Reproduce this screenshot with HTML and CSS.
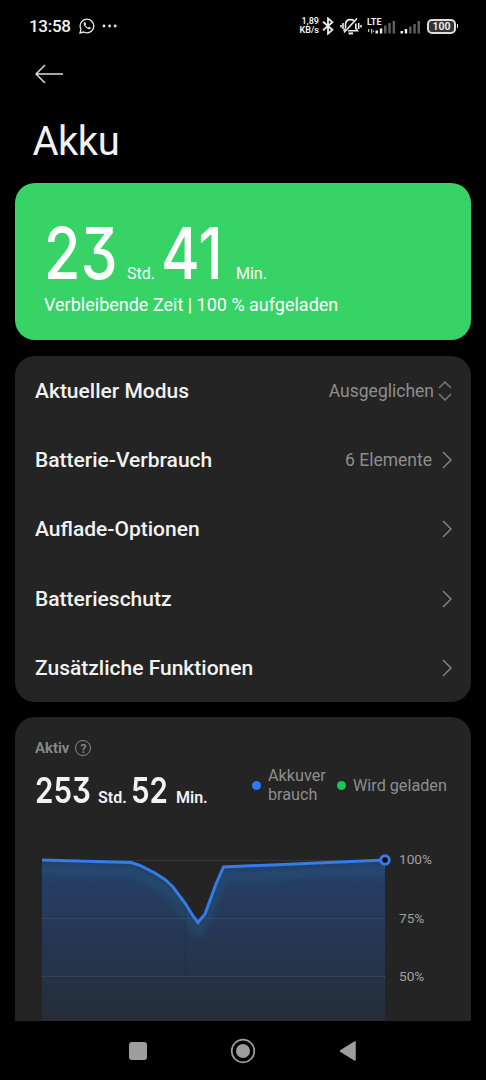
FILE: index.html
```html
<!DOCTYPE html>
<html lang="de">
<head>
    <meta charset="UTF-8">
    <meta name="viewport" content="width=device-width, initial-scale=1.0">
    <title>Akku</title>
    <link rel="stylesheet" href="styles.css">
</head>
<body>

<div class="phone">
    <!-- Status bar -->
    <div class="status-bar">
        <span class="clock">13:58</span>
        <svg class="whatsapp" width="16" height="16" viewBox="0 0 16 16" fill="none" stroke="#e8e8e8" stroke-width="1.3">
            <path d="M1 15l1-3.7A6.8 6.8 0 1 1 4.7 14z"/>
            <path d="M5.2 4.2c-1 1-.6 3 1.4 5s4 2.500 5 1.400c.5-.6.2-.9-.3-1.200l-1.200-.6-1 .9C8 9.400 6.700 8.100 6.300 7.100l.8-.9-.6-1.500c-.2-.5-.8-.9-1.300-.5z" fill="#e8e8e8" stroke="none"/>
        </svg>
        <svg class="dots" width="16" height="4" viewBox="0 0 16 4" fill="#e8e8e8">
            <circle cx="2" cy="2" r="1.4"/>
            <circle cx="7.600" cy="2" r="1.4"/>
            <circle cx="13.200" cy="2" r="1.4"/>
        </svg>

        <div class="status-icons">
            <span class="speed">1,89<br>KB/s</span>
            <svg class="bluetooth" width="12" height="18" viewBox="0 0 12 18" fill="none" stroke="#eee" stroke-width="1.8">
                <path d="M1 4.800l9.400 8L6 16.700V1.300l4.400 3.900L1 13.200"/>
            </svg>
            <svg class="bell" width="22" height="18" viewBox="0 0 22 18" fill="none" stroke="#eee" stroke-width="1.6">
                <path d="M5.500 11V7.500C5.500 4.500 7.500 2.600 10.500 2.600c1.500 0 2.600.4 3.500 1.200M15.800 6.500v4.800l1.700 2.500H8M3.500 13.800l2-2.300"/>
                <path d="M8.500 16.400h4.500" stroke-width="2"/>
                <path d="M4 15.500L17 1.500"/>
                <path d="M3 6v6M18.700 6v6M1 8v2.500M21 8v2.500"/>
            </svg>
            <div class="network">
                <span class="lte">LTE</span>
                <svg width="29" height="15" viewBox="0 0 29 15" fill="#eee">
                    <path d="M1 10h1.300v3H1zM4 10h1.300v4.500H4zM6 11.500h1v1.500H6z" fill="#bbb"/>
                    <path d="M8.500 11.500h2.500v3H8.500zM12.800 9.500h2.500v5h-2.500z"/>
                    <path d="M17 6.500h2.500v8H17zM21.300 4h2.500v10.500h-2.500zM25.600 2h2.500v12.500h-2.500z" fill="#5c5c5c"/>
                </svg>
            </div>
            <svg class="signal" width="21" height="15" viewBox="0 0 21 15" fill="#eee">
                <path d="M.5 12H3v2.500H.5zM4.700 10h2.500v4.500H4.700z"/>
                <path d="M9 7.500h2.500v7H9zM13.300 5h2.500v9.500h-2.500zM17.500 2H20v12.500h-2.500z" fill="#5c5c5c"/>
            </svg>
            <span class="battery">100</span>
            <span class="battery-tip"></span>
        </div>
    </div>

    <!-- Header -->
    <div class="header">
        <svg width="28" height="20" viewBox="0 0 28 20" fill="none" stroke="#ddd" stroke-width="1.5">
            <path d="M10 1L1 10l9 9M1 10h27"/>
        </svg>
        <h1>Akku</h1>
    </div>

    <!-- Remaining time -->
    <div class="remaining">
        <div class="remaining-time">
            <span class="num"><span class="digits">23</span></span>
            <span class="unit">Std.</span>
            <span class="num num-min"><span class="digits">41</span></span>
            <span class="unit">Min.</span>
        </div>
        <div class="remaining-info">Verbleibende Zeit | 100 % aufgeladen</div>
    </div>

    <!-- Options -->
    <div class="card options">
        <div class="row">
            <span class="label">Aktueller Modus</span>
            <span class="value">Ausgeglichen</span>
            <svg class="updown" width="14" height="20" viewBox="0 0 14 20" fill="none" stroke="#777" stroke-width="1.5">
                <path d="M1 7l6-6 6 6M1 13l6 6 6-6"/>
            </svg>
        </div>
        <div class="row">
            <span class="label">Batterie-Verbrauch</span>
            <span class="value">6 Elemente</span>
            <svg class="chevron" width="10" height="18" viewBox="0 0 10 18"><path d="M1 1l8 8-8 8"/></svg>
        </div>
        <div class="row">
            <span class="label">Auflade-Optionen</span>
            <svg class="chevron" width="10" height="18" viewBox="0 0 10 18"><path d="M1 1l8 8-8 8"/></svg>
        </div>
        <div class="row">
            <span class="label">Batterieschutz</span>
            <svg class="chevron" width="10" height="18" viewBox="0 0 10 18"><path d="M1 1l8 8-8 8"/></svg>
        </div>
        <div class="row">
            <span class="label">Zusätzliche Funktionen</span>
            <svg class="chevron" width="10" height="18" viewBox="0 0 10 18"><path d="M1 1l8 8-8 8"/></svg>
        </div>
    </div>

    <!-- Usage chart -->
    <div class="card usage">
        <div class="usage-title">Aktiv <span class="help">?</span></div>
        <div class="usage-head">
            <div class="active-time">
                <span class="num"><span class="digits">253</span></span>
                <span class="unit">Std.</span>
                <span class="num num-min"><span class="digits">52</span></span>
                <span class="unit">Min.</span>
            </div>
            <div class="legend">
                <span class="dot blue"></span>
                <span class="legend-use">Akkuver<br>brauch</span>
                <span class="dot green"></span>
                <span>Wird geladen</span>
            </div>
        </div>
        <div class="chart">
            <svg width="352" height="171" viewBox="0 0 352 171" fill="none">
                <defs>
                    <linearGradient id="area" x1="0" y1="10" x2="0" y2="171" gradientUnits="userSpaceOnUse">
                        <stop offset="0" stop-color="#26406a"/>
                        <stop offset="0.35" stop-color="#26395a"/>
                        <stop offset="1" stop-color="#252d37"/>
                    </linearGradient>
                    <filter id="glow" x="-10%" y="-30%" width="120%" height="180%">
                        <feGaussianBlur stdDeviation="3.5"/>
                    </filter>
                    <clipPath id="areaClip">
                        <path d="M0 10L89 12.500 98 15.500 112 22.500 123 29.500 131 37 143 53 151 66 156 72.500 163 64 174 34 181.500 17 343 10V171H0z"/>
                    </clipPath>
                </defs>
                <path d="M0 10.500H343" stroke="#484848" stroke-dasharray="1 1"/>
                <path d="M0 10L89 12.500 98 15.500 112 22.500 123 29.500 131 37 143 53 151 66 156 72.500 163 64 174 34 181.500 17 343 10V171H0z" fill="url(#area)"/>
                <g clip-path="url(#areaClip)">
                    <path d="M-8 20L89 22.500 98 25.500 112 32.500 123 39.500 131 47 143 63 151 76 156 82.500 163 74 174 44 181.500 27 352 20" stroke="#267195" stroke-opacity=".25" stroke-width="8" filter="url(#glow)"/>
                </g>
                <path d="M0 68.500H343M0 126.500H343" stroke="#4b5d76" stroke-opacity=".75" stroke-dasharray="1 1"/>
                <path d="M143.500 54V171" stroke="#202c3c" stroke-opacity=".5"/>
                <path d="M0 10L89 12.500 98 15.500 112 22.500 123 29.500 131 37 143 53 151 66 156 72.500 163 64 174 34 181.500 17 343 10" stroke="#327de9" stroke-width="3"/>
                <circle cx="343" cy="10" r="4.300" fill="#050a12" stroke="#327de9" stroke-width="3"/>
            </svg>
            <div class="axis">
                <span>100%</span>
                <span>75%</span>
                <span>50%</span>
            </div>
        </div>
    </div>

    <!-- Navigation bar -->
    <div class="nav-bar">
        <svg width="18" height="18" viewBox="0 0 18 18"><rect width="18" height="18" rx="3" fill="#9d9d9d"/></svg>
        <svg width="26" height="26" viewBox="0 0 26 26">
            <circle cx="13" cy="13" r="11.300" fill="none" stroke="#9d9d9d" stroke-width="1.700"/>
            <circle cx="13" cy="13" r="7" fill="#9d9d9d"/>
        </svg>
        <svg width="18" height="20" viewBox="0 0 18 20"><path d="M1.500 10L16 1v18z" fill="#9d9d9d" stroke="#9d9d9d" stroke-width="1.500" stroke-linejoin="round"/></svg>
    </div>
</div>

</body>
</html>
```
FILE: styles.css
```css
body {
    margin: 0;
    background-color: #000;
    color: #f2f2f2;
    font-family: Roboto, sans-serif;
}

svg {
    display: block;
    flex-shrink: 0;
}

h1 {
    margin: 0;
    font-size: 40px;
    font-weight: 400;
    letter-spacing: -0.5px;
    line-height: 48px;
}

.phone {
    display: flex;
    flex-direction: column;
    width: 486px;
    height: 1080px;
    overflow: hidden;
}

.status-bar {
    display: flex;
    align-items: center;
    height: 52px;
    padding: 0 28px 0 29px;
    box-sizing: border-box;
    flex-shrink: 0;
}

.clock {
    width: 50px;
    font-size: 17px;
    font-weight: 500;
    letter-spacing: -0.3px;
}

.dots {
    margin-left: 7px;
}

.status-icons {
    display: flex;
    align-items: center;
    margin-left: auto;
}

.speed {
    width: 20px;
    margin-right: 3px;
    font-size: 9px;
    font-weight: 600;
    line-height: 9px;
    text-align: right;
}

.bell {
    margin-left: 6px;
}

.network {
    position: relative;
    margin-left: 5px;
}

.lte {
    position: absolute;
    left: 0;
    top: -1px;
    font-size: 9px;
    font-weight: 700;
    line-height: 9px;
}

.signal {
    margin-left: 4px;
}

.battery {
    width: 29px;
    height: 15px;
    margin-left: 6px;
    box-sizing: border-box;
    border: 2px solid #ddd;
    border-radius: 5px;
    background-color: #333;
    font-size: 10.500px;
    font-weight: 600;
    line-height: 12px;
    text-align: center;
}

.battery-tip {
    width: 1px;
    height: 4px;
    margin-left: 1px;
    background-color: #ddd;
}

.header {
    height: 131px;
    padding: 12px 33px 0;
    box-sizing: border-box;
    flex-shrink: 0;
}

.header svg {
    margin-left: 2px;
}

.header h1 {
    margin: 34px 0 0 -0.500px;
}

.remaining {
    height: 157px;
    margin: 0 15px;
    padding: 32px 29px 0;
    box-sizing: border-box;
    border-radius: 20px;
    background-color: #38d367;
    color: #fff;
    flex-shrink: 0;
}

.remaining-time,
.active-time {
    display: flex;
    align-items: baseline;
}

.num {
    font-family: Inter, sans-serif;
    font-feature-settings: "cv09";
}

.digits {
    display: inline-block;
    transform: scaleX(0.82);
    transform-origin: left;
}

.remaining .num {
    width: 83px;
    font-size: 72px;
    font-weight: 550;
    line-height: 76px;
}

.remaining .num-min {
    width: 74px;
}

.remaining .unit {
    width: 35px;
    font-size: 16px;
}

.remaining .num-min .digits {
    margin-left: -1px;
}

.remaining-info {
    margin-top: 2px;
    font-size: 18px;
    line-height: 24px;
    white-space: nowrap;
}

.card {
    margin: 16px 15px 0;
    border-radius: 20px;
    background-color: #242424;
}

.options {
    height: 346px;
    flex-shrink: 0;
}

.row {
    display: flex;
    align-items: center;
    height: 69.300px;
    padding: 0 19px 0 20px;
}

.label {
    flex: 1;
    font-size: 21px;
    font-weight: 500;
}

.value {
    color: #8e8e8e;
    font-size: 17.500px;
}

.updown {
    margin-left: 4px;
}

.chevron {
    margin-left: 10px;
    fill: none;
    stroke: #888;
    stroke-width: 1.400;
}

.usage {
    flex: 1;
    min-height: 0;
    margin-top: 15px;
    padding: 20px 20px 0;
    border-radius: 20px 20px 0 0;
    overflow: hidden;
}

.usage-title {
    display: flex;
    align-items: center;
    height: 21px;
    color: #8a8a8a;
    font-size: 15px;
    font-weight: 600;
}

.help {
    width: 14px;
    height: 14px;
    margin-left: 6px;
    border: 1.500px solid #8a8a8a;
    border-radius: 50%;
    font-size: 13px;
    font-weight: 500;
    line-height: 15px;
    text-align: center;
}

.usage-head {
    display: flex;
    align-items: center;
    height: 54px;
}

.active-time {
    width: 217px;
    padding-top: 9px;
    flex-shrink: 0;
}

.active-time .num {
    width: 63px;
    font-size: 36px;
    font-weight: 600;
    line-height: 44px;
}

.active-time .num-min {
    width: 45px;
}

.active-time .unit {
    width: 33px;
    font-size: 16px;
    font-weight: 600;
}

.legend {
    display: flex;
    align-items: center;
    color: #8e8e8e;
    font-size: 16.200px;
    line-height: 19px;
    white-space: nowrap;
}

.dot {
    width: 9px;
    height: 9px;
    margin-right: 7px;
    border-radius: 50%;
}

.legend-use {
    width: 69px;
}

.blue {
    background-color: #2a7cf6;
}

.green {
    background-color: #16c950;
}

.chart {
    display: flex;
    margin: 38px 0 0 7px;
}

.axis {
    display: flex;
    flex-direction: column;
    gap: 38.500px;
    margin: -1px 0 0 5px;
    color: #a0a0a0;
    font-size: 13.600px;
    line-height: 20px;
}

.nav-bar {
    display: flex;
    align-items: center;
    justify-content: center;
    gap: 83px;
    height: 59px;
    padding-right: 1px;
    flex-shrink: 0;
}
```
